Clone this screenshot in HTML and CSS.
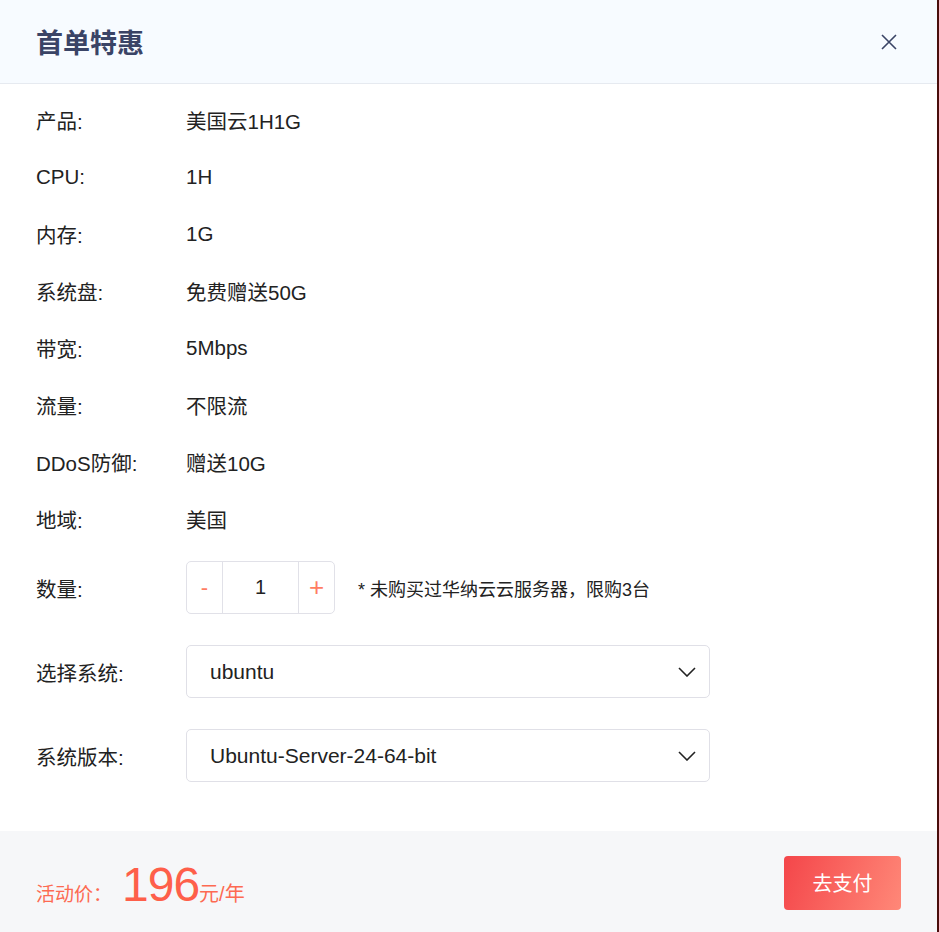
FILE: index.html
```html
<!DOCTYPE html>
<html lang="zh-CN">
<head>
<meta charset="utf-8">
<title>首单特惠</title>
<link rel="stylesheet" href="styles.css">
</head>
<body>
<div class="dialog">
  <div class="header">
    <h1 class="title">首单特惠</h1>
    <svg class="close" width="16" height="16" viewBox="0 0 16 16"><path d="M1 1L15 15M15 1L1 15" stroke="#3a4466" stroke-width="1.6" fill="none"/></svg>
  </div>
  <div class="body">
    <div class="row"><span class="label">产品:</span><span class="value">美国云1H1G</span></div>
    <div class="row"><span class="label">CPU:</span><span class="value">1H</span></div>
    <div class="row"><span class="label">内存:</span><span class="value">1G</span></div>
    <div class="row"><span class="label">系统盘:</span><span class="value">免费赠送50G</span></div>
    <div class="row"><span class="label">带宽:</span><span class="value">5Mbps</span></div>
    <div class="row"><span class="label">流量:</span><span class="value">不限流</span></div>
    <div class="row"><span class="label">DDoS防御:</span><span class="value">赠送10G</span></div>
    <div class="row"><span class="label">地域:</span><span class="value">美国</span></div>
    <div class="row qty-row">
      <span class="label">数量:</span>
      <div class="stepper">
        <span class="step minus">-</span>
        <span class="step-val">1</span>
        <span class="step plus">+</span>
      </div>
      <span class="note">* 未购买过华纳云云服务器，限购3台</span>
    </div>
    <div class="row sel-row">
      <span class="label">选择系统:</span>
      <div class="select"><span>ubuntu</span><svg class="chev" width="18" height="10" viewBox="0 0 18 10"><path d="M1 1L9 9L17 1" stroke="#222" stroke-width="1.6" fill="none"/></svg></div>
    </div>
    <div class="row sel-row">
      <span class="label">系统版本:</span>
      <div class="select"><span>Ubuntu-Server-24-64-bit</span><svg class="chev" width="18" height="10" viewBox="0 0 18 10"><path d="M1 1L9 9L17 1" stroke="#222" stroke-width="1.6" fill="none"/></svg></div>
    </div>
  </div>
  <div class="footer">
    <div class="price">
      <span class="p-label">活动价：</span><span class="p-num">196</span><span class="p-unit">元/年</span>
    </div>
    <button class="pay">去支付</button>
  </div>
</div>
</body>
</html>
```

FILE: styles.css
```css
html, body {
  margin: 0;
  padding: 0;
  height: 100%;
}
body {
  background: #4a0e0c;
  font-family: "Liberation Sans", "Noto Sans CJK SC", sans-serif;
  color: #222;
  overflow: hidden;
}
.dialog {
  width: 937px;
  height: 932px;
  background: #fff;
  display: flex;
  flex-direction: column;
}
.header {
  height: 83px;
  background: #f7fbff;
  border-bottom: 1px solid #e6eaf0;
  display: flex;
  align-items: center;
  justify-content: space-between;
  padding: 0 40px 0 36px;
  box-sizing: content-box;
}
.title {
  margin: 0;
  font-size: 27px;
  font-weight: bold;
  color: #3a4466;
}
.close {
  display: block;
}
.body {
  flex: 1;
  padding: 7px 36px 0;
}
.row {
  display: flex;
  align-items: center;
  height: 57px;
  font-size: 20.5px;
}
.label {
  width: 150px;
  flex: none;
  color: #222;
}
.value {
  color: #222;
}
.qty-row {
  height: 53px;
  margin-top: 14px;
}
.stepper {
  display: flex;
  height: 53px;
  box-sizing: border-box;
  border: 1px solid #e1e1e8;
  border-radius: 5px;
}
.step {
  width: 35px;
  display: flex;
  align-items: center;
  justify-content: center;
  color: #ff7d63;
  font-size: 22px;
}
.plus {
  font-size: 26px;
}
.step-val {
  width: 75px;
  border-left: 1px solid #e1e1e8;
  border-right: 1px solid #e1e1e8;
  display: flex;
  align-items: center;
  justify-content: center;
  font-size: 20px;
}
.note {
  margin-left: 23px;
  font-size: 18px;
  color: #222;
}
.sel-row {
  height: 53px;
  margin-top: 31px;
}
.select {
  width: 524px;
  height: 53px;
  box-sizing: border-box;
  border: 1px solid #e0e0e7;
  border-radius: 5px;
  display: flex;
  align-items: center;
  justify-content: space-between;
  padding: 0 13px 0 23px;
  font-size: 21px;
  color: #222;
}
.chev {
  display: block;
}
.footer {
  height: 101px;
  background: #f6f7f9;
  display: flex;
  align-items: center;
  justify-content: space-between;
  padding: 0 36px;
}
.price {
  display: flex;
  align-items: baseline;
  color: #fe5f4a;
  padding-top: 6px;
}
.p-label {
  font-size: 19px;
  color: #fd6a52;
}
.p-num {
  font-size: 48px;
  margin-left: 10px;
  letter-spacing: -1px;
}
.p-unit {
  font-size: 20px;
  color: #fd6a52;
}
.pay {
  width: 117px;
  height: 54px;
  margin-top: 2px;
  border: none;
  border-radius: 4px;
  background: linear-gradient(110deg, #f4464a 0%, #ff8878 100%);
  color: #fff;
  font-family: "Liberation Sans", "Noto Sans CJK SC", sans-serif;
  font-size: 20px;
  padding: 0;
}
```
